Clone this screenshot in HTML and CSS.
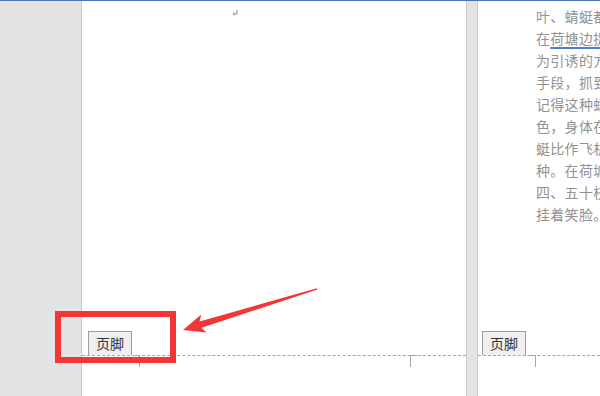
FILE: index.html
```html
<!DOCTYPE html>
<html lang="zh">
<head>
<meta charset="utf-8">
<link rel="stylesheet" href="styles.css">
</head>
<body>
<div class="app">
  <div class="topbar"></div>
  <div class="workspace">
    <div class="gutter"></div>
    <div class="page page-one">
      <div class="page-body">
        <svg class="para-mark" width="6" height="7" viewBox="0 0 6 7"><path d="M5 0 V4 H1 M2.5 2.5 L1 4 L2.5 5.5" fill="none" stroke="#8a8a8a" stroke-width="1"/></svg>
      </div>
      <div class="footer">
        <div class="tab">页脚</div>
        <div class="rule"></div>
        <div class="marks">
          <div class="mark mark-left"></div>
          <div class="mark mark-right"></div>
        </div>
      </div>
    </div>
    <div class="strip"></div>
    <div class="page page-two">
      <div class="page-body text">
        <p>叶、蜻蜓都在荷塘</p>
        <p>在<span class="squiggle">荷塘边捉</span>蜻蜓</p>
        <p>为引诱的方法</p>
        <p>手段，抓到了</p>
        <p>记得这种蜻蜓</p>
        <p>色，身体在阳</p>
        <p>蜓比作飞机的</p>
        <p>种。在荷塘里</p>
        <p>四、五十枝荷</p>
        <p>挂着笑脸。</p>
      </div>
      <div class="footer">
        <div class="tab tab-two">页脚</div>
        <div class="rule"></div>
        <div class="marks">
          <div class="mark mark-left"></div>
        </div>
      </div>
    </div>
  </div>
  <div class="callout"></div>
  <svg class="arrow" width="600" height="396" viewBox="0 0 600 396">
    <polygon points="183,330 206.6,332.6 201.4,327.8 317.4,289.6 316.8,288.2 199.6,321.6 201.2,314.6" fill="#f43535"/>
  </svg>
</div>
</body>
</html>
```
FILE: styles.css
```css
* { box-sizing: border-box; }
html, body { margin: 0; padding: 0; }
body {
  width: 600px;
  height: 396px;
  overflow: hidden;
  background: #e3e3e3;
  font-family: "Noto Sans CJK SC", "Noto Sans", sans-serif;
}
.app {
  position: relative;
  width: 600px;
  height: 396px;
  display: flex;
  flex-direction: column;
}
.topbar {
  height: 1px;
  background: #4d74b2;
  flex: none;
}
.workspace {
  flex: 1;
  display: flex;
  min-height: 0;
}
.gutter {
  width: 82px;
  flex: none;
  background: #e3e3e3;
  border-right: 1px solid #c9c9c9;
}
.page {
  background: #fff;
  display: flex;
  flex-direction: column;
  overflow: hidden;
}
.page-one { width: 384px; flex: none; }
.page-two { flex: 1; min-width: 0; }
.strip {
  width: 12px;
  flex: none;
  background: #e3e3e3;
  border-left: 1px solid #c9c9c9;
  border-right: 1px solid #c9c9c9;
}
.page-body {
  flex: 1;
  position: relative;
}
.para-mark {
  display: block;
  margin: 9px 0 0 150px;
}
.text {
  padding: 4px 0 0 58px;
  color: #929292;
  font-size: 14px;
  line-height: 22px;
  letter-spacing: 0.3px;
  white-space: nowrap;
}
.text p { margin: 0; }
.squiggle {
  text-decoration: underline;
  text-decoration-color: #4f7cd0;
  text-decoration-thickness: 2px;
  text-underline-offset: 3px;
}
.footer {
  flex: none;
  height: 65px;
  display: flex;
  flex-direction: column;
}
.tab {
  width: 44px;
  height: 24px;
  margin-left: 6px;
  background: #efefef;
  border: 1px solid #9d9d9d;
  border-bottom: none;
  font-size: 14px;
  line-height: 22px;
  color: #333;
  text-align: center;
}
.tab-two { margin-left: 4px; }
.rule {
  height: 0;
  border-top: 1px dashed #a5a5a5;
}
.marks {
  display: flex;
  justify-content: space-between;
  padding: 0 49px 0 51px;
  margin-top: -1px;
}
.mark {
  width: 7px;
  height: 12px;
  border-top: 1px solid #a5a5a5;
}
.mark-left { border-right: 1px solid #a5a5a5; }
.mark-right { border-left: 1px solid #a5a5a5; }
.callout {
  position: absolute;
  left: 55px;
  top: 311px;
  width: 121px;
  height: 52px;
  border: 6px solid #f43535;
}
.arrow {
  position: absolute;
  left: 0;
  top: 0;
}
```
